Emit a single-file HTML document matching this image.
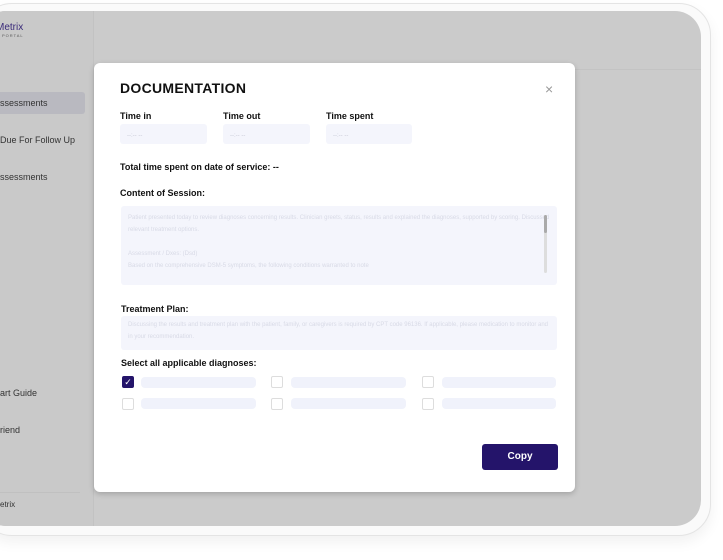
<!DOCTYPE html>
<html><head><style>
*{margin:0;padding:0;box-sizing:border-box}
body{width:723px;height:560px;background:#fff;font-family:"Liberation Sans",sans-serif;position:relative;overflow:hidden}
.frame{position:absolute;left:-20px;top:3px;width:731px;height:533px;border:1px solid #e4e4e4;border-radius:32px;background:#fafafa;box-shadow:0 6px 14px rgba(0,0,0,.06)}
.screen{position:absolute;left:-20px;top:11px;width:721px;height:515px;background:#cbcbcb;border-radius:26px;overflow:hidden}
.side{position:absolute;left:0;top:0;width:114px;height:100%;background:#c9c9c9;border-right:1px solid #c2c2c2}
.hdr{position:absolute;left:114px;top:58px;right:0;height:1px;background:#c3c3c3}
.s{position:absolute;font-size:9px;color:#333}
.modal{position:absolute;left:94px;top:63px;width:481px;height:429px;background:#fff;border-radius:6px;box-shadow:0 2px 6px rgba(0,0,0,.2)}
.m{position:absolute;font-weight:bold;color:#111}
.box{position:absolute;background:#f4f5fc;border-radius:3px;font-size:6px;color:#d8dae6;padding:6px 7px;line-height:12px}
.cb{position:absolute;width:12px;height:12px;border:1px solid #ddd;border-radius:2px;background:#fff}
.bar{position:absolute;height:11px;background:#f0f2fb;border-radius:4px;width:115px}
</style></head><body>
<div class="frame"></div>
<div class="screen">
<div class="side"></div><div class="hdr"></div>
</div>
<div class="s" style="left:-4px;top:22px;font-size:10px;color:#3a2a7a">Metrix</div>
<div class="s" style="left:2px;top:33px;font-size:4px;letter-spacing:1px;color:#555">PORTAL</div>
<div style="position:absolute;left:0;top:92px;width:85px;height:22px;background:#b9b9c0;border-radius:0 3px 3px 0"></div>
<div class="s" style="left:0;top:98px">ssessments</div>
<div class="s" style="left:0;top:135px">Due For Follow Up</div>
<div class="s" style="left:0;top:172px">ssessments</div>
<div class="s" style="left:0;top:388px">art Guide</div>
<div class="s" style="left:0;top:425px">riend</div>
<div style="position:absolute;left:0;top:492px;width:80px;height:1px;background:#c0c0c0"></div>
<div class="s" style="left:0;top:500px;font-size:8px">etrix</div>
<div class="modal">
<div class="m" style="left:26px;top:17px;font-size:14px;letter-spacing:.3px">DOCUMENTATION</div>
<div style="position:absolute;left:451px;top:18px;font-size:14px;color:#999">×</div>
<div class="m" style="left:26px;top:48px;font-size:9px">Time in</div>
<div class="m" style="left:129px;top:48px;font-size:9px">Time out</div>
<div class="m" style="left:232px;top:48px;font-size:9px">Time spent</div>
<div class="box" style="left:26px;top:61px;width:87px;height:20px;color:#c8cad6">--:-- --</div>
<div class="box" style="left:129px;top:61px;width:87px;height:20px;color:#c8cad6">--:-- --</div>
<div class="box" style="left:232px;top:61px;width:86px;height:20px;color:#c8cad6">--:-- --</div>
<div class="m" style="left:26px;top:99px;font-size:9px">Total time spent on date of service: --</div>
<div class="m" style="left:26px;top:125px;font-size:9px">Content of Session:</div>
<div class="box" style="left:27px;top:143px;width:436px;height:79px">Patient presented today to review diagnoses concerning results. Clinician greets, status, results and explained the diagnoses, supported by scoring. Discussed relevant treatment options.<br><br>Assessment / Dxes: (Dsd)<br>Based on the comprehensive DSM-5 symptoms, the following conditions warranted to note</div>
<div style="position:absolute;left:450px;top:152px;width:3px;height:58px;background:#ddd;border-radius:2px"><div style="height:18px;background:#aaa;border-radius:2px"></div></div>
<div class="m" style="left:27px;top:241px;font-size:9px">Treatment Plan:</div>
<div class="box" style="left:27px;top:253px;width:436px;height:34px;padding-top:3px">Discussing the results and treatment plan with the patient, family, or caregivers is required by CPT code 96136. If applicable, please medication to monitor and in your recommendation.</div>
<div class="m" style="left:27px;top:295px;font-size:9px">Select all applicable diagnoses:</div>
<div class="cb" style="left:28px;top:313px;background:#24146a;border-color:#24146a;color:#fff;font-size:9px;line-height:10px;text-align:center">✓</div>
<div class="cb" style="left:177px;top:313px"></div><div class="cb" style="left:328px;top:313px"></div>
<div class="cb" style="left:28px;top:335px"></div><div class="cb" style="left:177px;top:335px"></div><div class="cb" style="left:328px;top:335px"></div>
<div class="bar" style="left:47px;top:314px"></div><div class="bar" style="left:197px;top:314px"></div><div class="bar" style="left:348px;top:314px;width:114px"></div>
<div class="bar" style="left:47px;top:335px"></div><div class="bar" style="left:197px;top:335px"></div><div class="bar" style="left:348px;top:335px;width:114px"></div>
<div style="position:absolute;left:388px;top:381px;width:76px;height:26px;background:#24146a;border-radius:3px;color:#fff;font-size:10px;font-weight:bold;text-align:center;line-height:26px">Copy</div>
</div>
</body></html>
